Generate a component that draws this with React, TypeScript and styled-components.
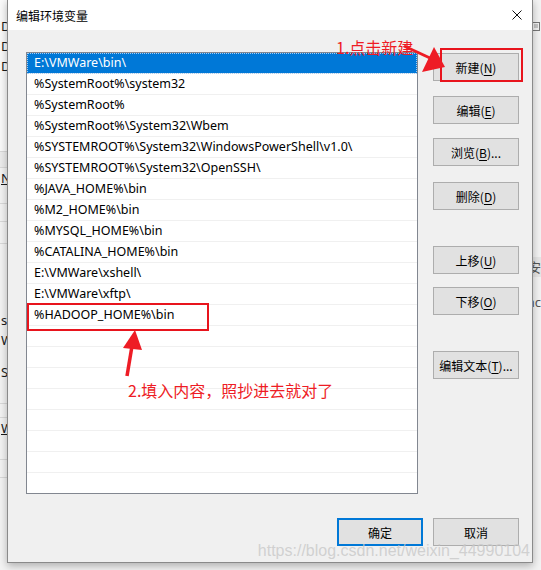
import React from "react";
import styled, { createGlobalStyle } from "styled-components";

const GlobalStyle = createGlobalStyle`
  html, body { margin: 0; padding: 0; }
  body {
    width: 541px;
    height: 570px;
    overflow: hidden;
    background: #f3f3f3;
    font-family: "Noto Sans", "Noto Sans CJK SC", sans-serif;
  }
`;

const Desktop = styled.div`
  position: relative;
  width: 541px;
  height: 570px;
  overflow: hidden;
  background: #f3f3f3;
`;

/* ---------- background window fragments ---------- */
const Backdrop = styled.div`
  display: flex;
  justify-content: space-between;
  height: 100%;
`;

const BackColumn = styled.div<{ $align?: string }>`
  width: 40px;
  display: flex;
  flex-direction: column;
  align-items: ${(p) => p.$align || "flex-start"};
  font-size: 13px;
  color: #1a1a1a;
`;

const BackRow = styled.div<{ $h: number; $bg?: string; $line?: boolean; $under?: boolean }>`
  height: ${(p) => p.$h}px;
  width: 100%;
  box-sizing: border-box;
  background: ${(p) => p.$bg || "transparent"};
  border-bottom: ${(p) => (p.$line ? "1px solid #d9d9d9" : "none")};
  line-height: ${(p) => p.$h}px;
  padding-left: 1px;
  white-space: nowrap;
  overflow: hidden;
  text-decoration: ${(p) => (p.$under ? "underline" : "none")};
`;

const RightRow = styled(BackRow)`
  padding-left: 0;
  text-align: right;
  padding-right: 0;
  color: #555;
  display: flex;
  justify-content: flex-end;
  align-items: center;
`;

const TinyIcon = styled.svg`
  width: 8px;
  height: 9px;
  margin-right: 1px;
`;

/* ---------- dialog ---------- */
const Dialog = styled.div`
  position: absolute;
  left: 7px;
  top: -1px;
  width: 526px;
  height: 564px;
  box-sizing: border-box;
  border: 1px solid #8a8a8a;
  background: #f0f0f0;
  box-shadow: 0 3px 8px rgba(0, 0, 0, 0.28);
  display: flex;
  flex-direction: column;
`;

const TitleBar = styled.div`
  height: 30px;
  flex: none;
  background: #ffffff;
  display: flex;
  align-items: center;
  justify-content: space-between;
  padding: 0 10px 0 8px;
`;

const Title = styled.span`
  font-family: "Noto Sans CJK SC", sans-serif;
  font-size: 12px;
  color: #000;
`;

const CloseIcon = styled.svg`
  width: 10px;
  height: 10px;
`;

const Client = styled.div`
  flex: 1;
  display: grid;
  grid-template-columns: 392px 86px;
  grid-template-rows: 442px 28px;
  column-gap: 15px;
  row-gap: 24px;
  padding: 22px 13px 16px 18px;
`;

const ListBox = styled.div`
  border: 1px solid #828790;
  background: #ffffff;
  overflow: hidden;
  box-sizing: border-box;
`;

const Row = styled.div<{ $selected?: boolean }>`
  height: 21px;
  box-sizing: border-box;
  border-bottom: 1px solid #f0f0f0;
  padding-left: 7px;
  line-height: 20px;
  font-size: 12.5px;
  white-space: nowrap;
  color: ${(p) => (p.$selected ? "#ffffff" : "#000000")};
  background: ${(p) => (p.$selected ? "#0078d7" : "transparent")};
  outline: ${(p) => (p.$selected ? "1px dotted #a9cdf0" : "none")};
  outline-offset: -1px;
`;

const ButtonColumn = styled.div`
  display: flex;
  flex-direction: column;
`;

const Button = styled.div<{ $gap?: number; $default?: boolean }>`
  width: 86px;
  height: 28px;
  flex: none;
  box-sizing: border-box;
  margin-top: ${(p) => p.$gap || 0}px;
  background: #e1e1e1;
  border: ${(p) => (p.$default ? "2px solid #0078d7" : "1px solid #adadad")};
  display: flex;
  align-items: center;
  justify-content: center;
  font-family: "Noto Sans CJK SC", sans-serif;
  font-size: 12px;
  color: #000;
  u { text-underline-offset: 2px; }
`;

const Footer = styled.div`
  grid-column: 1 / span 2;
  display: flex;
  justify-content: flex-end;
  gap: 10px;
`;

/* ---------- annotations ---------- */
const RedBox = styled.div<{ $l: number; $t: number; $w: number; $h: number }>`
  position: absolute;
  left: ${(p) => p.$l}px;
  top: ${(p) => p.$t}px;
  width: ${(p) => p.$w}px;
  height: ${(p) => p.$h}px;
  box-sizing: border-box;
  border: 2px solid #e8141d;
  pointer-events: none;
`;

const Note = styled.div<{ $l: number; $t: number }>`
  position: absolute;
  left: ${(p) => p.$l}px;
  top: ${(p) => p.$t}px;
  font-family: "Noto Sans CJK SC", sans-serif;
  font-size: 16px;
  line-height: 20px;
  color: #ee1c25;
  white-space: nowrap;
`;

const ArrowLayer = styled.svg`
  position: absolute;
  left: 0;
  top: 0;
  width: 541px;
  height: 570px;
  pointer-events: none;
`;

const Watermark = styled.div`
  position: absolute;
  right: 11px;
  top: 541px;
  font-family: "Liberation Sans", Arial, sans-serif;
  font-size: 16px;
  line-height: 20px;
  color: rgba(200, 200, 200, 0.8);
  white-space: nowrap;
  pointer-events: none;
`;

const items = [
  "E:\\VMWare\\bin\\",
  "%SystemRoot%\\system32",
  "%SystemRoot%",
  "%SystemRoot%\\System32\\Wbem",
  "%SYSTEMROOT%\\System32\\WindowsPowerShell\\v1.0\\",
  "%SYSTEMROOT%\\System32\\OpenSSH\\",
  "%JAVA_HOME%\\bin",
  "%M2_HOME%\\bin",
  "%MYSQL_HOME%\\bin",
  "%CATALINA_HOME%\\bin",
  "E:\\VMWare\\xshell\\",
  "E:\\VMWare\\xftp\\",
  "%HADOOP_HOME%\\bin",
];

const rows = [...items, ...Array(8).fill("")];

const sideButtons: { label: string; key: string; tail?: string; gap: number }[] = [
  { label: "新建", key: "N", gap: 1 },
  { label: "编辑", key: "E", gap: 15 },
  { label: "浏览", key: "B", tail: "...", gap: 14 },
  { label: "删除", key: "D", gap: 16 },
  { label: "上移", key: "U", gap: 36 },
  { label: "下移", key: "O", gap: 13 },
  { label: "编辑文本", key: "T", tail: "...", gap: 36 },
];

export default function App() {
  return (
    <>
      <GlobalStyle />
      <Desktop>
        <Backdrop>
          <BackColumn>
            <BackRow $h={16} $bg="#fafafa" />
            <BackRow $h={20} $bg="#fafafa">D</BackRow>
            <BackRow $h={20} $bg="#fafafa">D</BackRow>
            <BackRow $h={20} $bg="#fafafa">D</BackRow>
            <BackRow $h={76} $bg="#fafafa" $line />
            <BackRow $h={16} $bg="#ececec" $line />
            <BackRow $h={20} $under>N</BackRow>
            <BackRow $h={16} $line />
            <BackRow $h={18} $line />
            <BackRow $h={22} $line />
            <BackRow $h={66} />
            <BackRow $h={20}>s\</BackRow>
            <BackRow $h={20}>W</BackRow>
            <BackRow $h={12} />
            <BackRow $h={20}>St</BackRow>
            <BackRow $h={22} $line />
            <BackRow $h={14} $line />
            <BackRow $h={20} $under>W</BackRow>
            <BackRow $h={22} $line />
            <BackRow $h={18} $line />
          </BackColumn>
          <BackColumn $align="flex-end">
            <RightRow $h={20} />
            <RightRow $h={12}>
              <TinyIcon viewBox="0 0 8 9">
                <rect x="0.5" y="0.5" width="7" height="8" fill="none" stroke="#777" />
                <path d="M2 3h4M2 5h4" stroke="#999" />
              </TinyIcon>
            </RightRow>
            <RightRow $h={225} />
            <RightRow $h={20} $bg="#e6e6e6">安</RightRow>
            <RightRow $h={15} />
            <RightRow $h={20}>nc</RightRow>
          </BackColumn>
        </Backdrop>

        <Dialog>
          <TitleBar>
            <Title>编辑环境变量</Title>
            <CloseIcon viewBox="0 0 10 10">
              <path d="M0.5 0.5 L9.5 9.5 M9.5 0.5 L0.5 9.5" stroke="#111" strokeWidth="1" fill="none" />
            </CloseIcon>
          </TitleBar>
          <Client>
            <ListBox>
              {rows.map((t, i) => (
                <Row key={i} $selected={i === 0}>
                  {t}
                </Row>
              ))}
            </ListBox>
            <ButtonColumn>
              {sideButtons.map((b) => (
                <Button key={b.key} $gap={b.gap}>
                  {b.label}(<u>{b.key}</u>){b.tail || ""}
                </Button>
              ))}
            </ButtonColumn>
            <Footer>
              <Button $default>确定</Button>
              <Button>取消</Button>
            </Footer>
          </Client>
        </Dialog>

        <RedBox $l={440} $t={48} $w={83} $h={34} />
        <RedBox $l={27} $t={303} $w={182} $h={28} />
        <Note $l={336} $t={37}>1.点击新建</Note>
        <Note $l={128} $t={380}>2.填入内容，照抄进去就对了</Note>
        <ArrowLayer viewBox="0 0 541 570">
          <line x1="404" y1="46" x2="430" y2="58" stroke="#ee1c25" strokeWidth="3" />
          <polygon points="445,67 434,47 422,72" fill="#ee1c25" />
          <line x1="127" y1="376" x2="132" y2="346" stroke="#ee1c25" strokeWidth="3.5" />
          <polygon points="135,330 123,348 142,350" fill="#ee1c25" />
        </ArrowLayer>
        <Watermark>https://blog.csdn.net/weixin_44990104</Watermark>
      </Desktop>
    </>
  );
}
